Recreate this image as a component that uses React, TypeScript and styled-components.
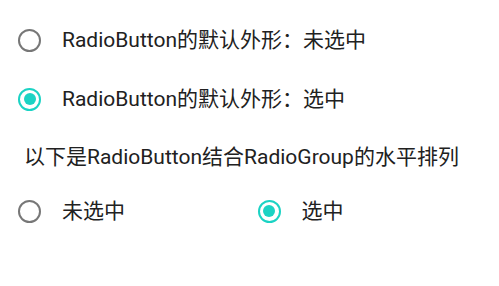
import React, { useState } from 'react';
import styled, { createGlobalStyle } from 'styled-components';

const GlobalStyle = createGlobalStyle`
  html, body {
    margin: 0;
    padding: 0;
    background: #ffffff;
  }
  body {
    font-family: Roboto, "Noto Sans CJK SC", sans-serif;
    color: #212121;
  }
`;

const Page = styled.div`
  width: 499px;
  height: 286px;
  box-sizing: border-box;
  padding: 16px 10px 0;
  display: flex;
  flex-direction: column;
`;

const Row = styled.label<{ gapTop?: number }>`
  display: flex;
  align-items: center;
  height: 48px;
  margin-top: ${({ gapTop }) => gapTop ?? 0}px;
  padding-left: 8px;
  cursor: pointer;
`;

const Group = styled.div`
  display: grid;
  grid-template-columns: 1fr 1fr;
  margin-top: 16px;
`;

const Circle = styled.span<{ checked: boolean }>`
  position: relative;
  flex: none;
  width: 23px;
  height: 23px;
  box-sizing: border-box;
  border-radius: 50%;
  border: 2.3px solid ${({ checked }) => (checked ? '#1bd3c4' : '#777777')};

  &::after {
    content: '';
    position: absolute;
    left: 50%;
    top: 50%;
    width: 12px;
    height: 12px;
    margin: -6px 0 0 -6px;
    border-radius: 50%;
    background: #1bd3c4;
    display: ${({ checked }) => (checked ? 'block' : 'none')};
  }
`;

const Text = styled.span`
  margin-left: 21px;
  font-size: 21px;
  line-height: 28px;
`;

const Caption = styled.div`
  margin-top: 20px;
  padding-left: 14px;
  font-size: 21px;
  line-height: 28px;
`;

interface RadioProps {
  checked: boolean;
  label: string;
  onSelect?: () => void;
  gapTop?: number;
}

const Radio: React.FC<RadioProps> = ({ checked, label, onSelect, gapTop }) => (
  <Row gapTop={gapTop} onClick={onSelect}>
    <Circle checked={checked} />
    <Text>{label}</Text>
  </Row>
);

const App: React.FC = () => {
  const [selected, setSelected] = useState(1);

  return (
    <>
      <GlobalStyle />
      <Page>
        <Radio checked={false} label="RadioButton的默认外形：未选中" />
        <Radio checked label="RadioButton的默认外形：选中" gapTop={11} />
        <Caption>以下是RadioButton结合RadioGroup的水平排列</Caption>
        <Group>
          <Radio
            checked={selected === 0}
            label="未选中"
            onSelect={() => setSelected(0)}
          />
          <Radio
            checked={selected === 1}
            label="选中"
            onSelect={() => setSelected(1)}
          />
        </Group>
      </Page>
    </>
  );
};

export default App;
